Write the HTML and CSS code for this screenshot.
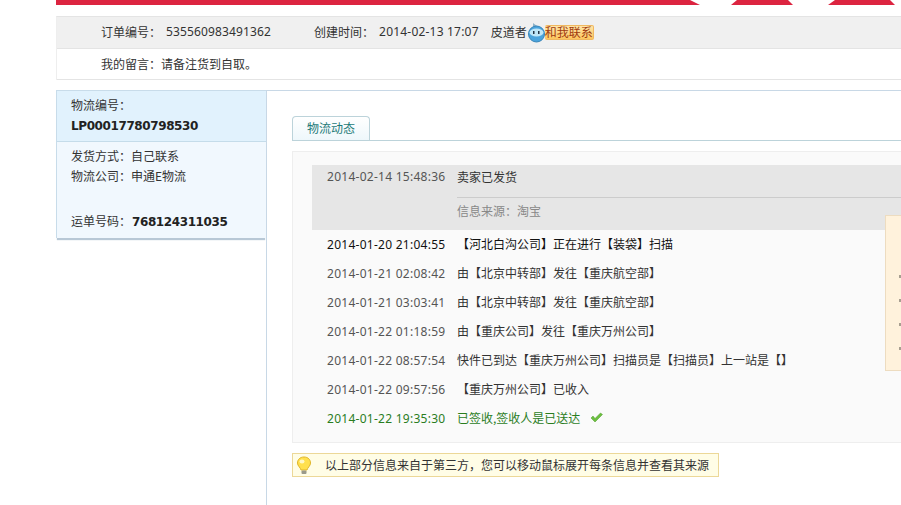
FILE: index.html
```html
<!DOCTYPE html>
<html lang="en">
<head>
    <meta charset="UTF-8">
    <meta name="viewport" content="width=device-width, initial-scale=1.0">
    <title>物流动态</title>
    <link rel="stylesheet" href="styles.css">
</head>
<body>
    <div class="page">
        <!-- Red top band with notches -->
        <svg class="top-band" width="845" height="5" viewBox="0 0 845 5">
            <polygon points="0,0 634,0 644,5 0,5" fill="#dc2440"/>
            <polygon points="681,0 732,0 737,5 675,5" fill="#dc2440"/>
            <polygon points="779,0 834,0 839,5 772,5" fill="#dc2440"/>
        </svg>

        <!-- Order info -->
        <div class="order-info">
            <div class="order-row order-row-grey">
                <span>订单编号：</span>
                <span class="num order-no">535560983491362</span>
                <span class="created">创建时间：</span>
                <span class="num created-time">2014-02-13 17:07</span>
                <span class="seller">皮道者</span>
                <svg class="ww-icon" width="19" height="21" viewBox="0 0 19 21">
                    <path d="M6 1 L12 5.5 L6 6.5 Z" fill="#8fb2c8"/>
                    <circle cx="9.5" cy="12" r="8" fill="#4aa3dc" stroke="#3a86b8"/>
                    <ellipse cx="9.5" cy="10.5" rx="7" ry="4" fill="#bfe6f7"/>
                    <rect x="6" y="9" width="1.5" height="3" fill="#234"/>
                    <rect x="11" y="9" width="1.5" height="3" fill="#234"/>
                </svg>
                <span class="contact-btn">和我联系</span>
            </div>
            <div class="order-row order-row-note">我的留言：请备注货到自取。</div>
        </div>

        <div class="content">
            <!-- Left side panel -->
            <div class="side-panel">
                <div class="side-head">
                    <div>物流编号：</div>
                    <div class="num-bold">LP00017780798530</div>
                </div>
                <div class="side-body">
                    <div>发货方式：自己联系</div>
                    <div>物流公司：申通E物流</div>
                    <div class="waybill">运单号码：<span class="num-bold waybill-no">768124311035</span></div>
                </div>
            </div>

            <!-- Logistics details -->
            <div class="main">
                <div class="tab-bar">
                    <div class="tab">物流动态</div>
                </div>

                <div class="trace-box">
                    <div class="trace-open">
                        <div class="trace-open-top">
                            <span class="num trace-time">2014-02-14 15:48:36</span>
                            <span>卖家已发货</span>
                        </div>
                        <div class="trace-source">信息来源：淘宝</div>
                    </div>

                    <div class="trace-row trace-first">
                        <span class="num trace-time">2014-01-20 21:04:55</span>
                        <span>【河北白沟公司】正在进行【装袋】扫描</span>
                    </div>
                    <div class="trace-row">
                        <span class="num trace-time">2014-01-21 02:08:42</span>
                        <span>由【北京中转部】发往【重庆航空部】</span>
                    </div>
                    <div class="trace-row">
                        <span class="num trace-time">2014-01-21 03:03:41</span>
                        <span>由【北京中转部】发往【重庆航空部】</span>
                    </div>
                    <div class="trace-row">
                        <span class="num trace-time">2014-01-22 01:18:59</span>
                        <span>由【重庆公司】发往【重庆万州公司】</span>
                    </div>
                    <div class="trace-row">
                        <span class="num trace-time">2014-01-22 08:57:54</span>
                        <span>快件已到达【重庆万州公司】扫描员是【扫描员】上一站是【】</span>
                    </div>
                    <div class="trace-row">
                        <span class="num trace-time">2014-01-22 09:57:56</span>
                        <span>【重庆万州公司】已收入</span>
                    </div>
                    <div class="trace-row trace-done">
                        <span class="num trace-time">2014-01-22 19:35:30</span>
                        <span>已签收,签收人是已送达</span>
                        <svg class="check-icon" width="13" height="11" viewBox="0 0 13 11">
                            <path d="M1 6 L3 4 L5 6.5 L10.5 1 L12.5 2.5 L5 10 Z" fill="#6cbf3f" stroke="#4d9a2a" stroke-width="0.5"/>
                        </svg>
                    </div>

                    <!-- Popover lying over the list -->
                    <div class="popover">
                        <i></i><i></i><i></i><i></i>
                    </div>
                </div>

                <div class="tip">
                    <svg class="bulb-icon" width="16" height="19" viewBox="0 0 16 19">
                        <path d="M8 1 C3.8 1 1.5 3.8 1.5 7 C1.5 10 4.5 11.5 5 14 L11 14 C11.5 11.5 14.5 10 14.5 7 C14.5 3.8 12.2 1 8 1 Z" fill="#ffe04d" stroke="#dfb52a"/>
                        <ellipse cx="6" cy="5.5" rx="2.5" ry="2" fill="#fff7c4"/>
                        <rect x="5.5" y="14.5" width="5" height="3.5" rx="1" fill="#9a9a8a"/>
                    </svg>
                    <span class="tip-text">以上部分信息来自于第三方，您可以移动鼠标展开每条信息并查看其来源</span>
                </div>
            </div>
        </div>
    </div>
</body>
</html>
```

FILE: styles.css
```css
html, body {
    margin: 0;
    height: 505px;
    overflow: hidden;
    background-color: white;
}

body {
    font-family: "Noto Sans CJK SC", "DejaVu Sans", sans-serif;
    font-size: 12px;
    color: #333;
}

.page {
    margin-left: 56px;
    height: 505px;
    display: flex;
    flex-direction: column;
}

.top-band {
    display: block;
    flex: none;
    margin-bottom: 11px;
}

.num {
    font-family: "Noto Sans", sans-serif;
    font-size: 12px;
    letter-spacing: 0.27px;
}

.num-bold {
    font-family: "DejaVu Sans", sans-serif;
    font-size: 12px;
    font-weight: bold;
    letter-spacing: -0.4px;
    color: #222;
}

/* Order info */
.order-info {
    flex: none;
    border-top: 1px solid #e4e4e4;
    border-left: 1px solid #eee;
    margin-bottom: 10px;
}

.order-row {
    height: 30px;
    box-sizing: content-box;
    display: flex;
    align-items: center;
    padding-left: 44px;
    border-bottom: 1px solid #e4e4e4;
}

.order-row-grey {
    height: 31px;
    background-color: #f0f0f0;
}

.order-row-note {
    height: 28px;
    padding-bottom: 2px;
}

.order-row-grey > span:not(.contact-btn) {
    margin-bottom: 2px;
}

.order-no {
    margin-left: 5px;
    letter-spacing: 0.14px;
}

.created {
    margin-left: 43px;
}

.created-time {
    margin-left: 5px;
    letter-spacing: 0.2px;
}

.seller {
    margin-left: 12px;
}

.ww-icon {
    flex: none;
    margin-top: -1px;
}

.contact-btn {
    margin-left: -1px;
    margin-bottom: 1px;
    width: 49px;
    height: 15px;
    box-sizing: border-box;
    line-height: 12px;
    text-align: center;
    color: #a03a10;
    background: linear-gradient(#ffe6a8, #fcc55e);
    border: 1px solid #f0b860;
    border-left: none;
    border-radius: 2px;
}

/* Layout below */
.content {
    flex: 1;
    display: flex;
}

.side-panel {
    flex: none;
    align-self: flex-start;
    width: 209px;
    border: 1px solid #c8dcea;
    border-right: none;
    border-bottom: none;
    box-shadow: 0 3px 1px -1px #b8c8d6;
    line-height: 20px;
}

.side-head {
    height: 50px;
    padding-left: 14px;
    background-color: #e1f2fd;
    border-bottom: 1px solid #c5dcea;
}

.side-head > div:first-child {
    padding-top: 4px;
}

.side-head .num-bold {
    padding-top: 1px;
}

.side-body {
    height: 96px;
    padding-left: 14px;
    padding-top: 4px;
    box-sizing: border-box;
    background-color: #f1f8fe;
}

.waybill {
    margin-top: 25px;
}

.waybill-no {
    margin-left: 1px;
}

.main {
    flex: 1;
    min-width: 0;
    border-top: 1px solid #c8d8e6;
    border-left: 1px solid #c8d8e6;
    padding-left: 25px;
    padding-top: 25px;
}

.tab-bar {
    border-bottom: 1px solid #bcd3da;
    height: 24px;
}

.tab {
    width: 78px;
    height: 24px;
    box-sizing: border-box;
    line-height: 22px;
    text-align: center;
    color: #1d7a78;
    background: linear-gradient(#fff, #eef7fb);
    border: 1px solid #bcd3da;
    border-bottom: none;
    border-radius: 4px 4px 0 0;
}

/* Trace list */
.trace-box {
    position: relative;
    margin-top: 10px;
    padding: 13px 0 9px 19px;
    background-color: #fafafa;
    border: 1px solid #eee;
    border-right: none;
}

.trace-open {
    height: 65px;
    background-color: #e6e6e6;
    padding-left: 15px;
}

.trace-open-top {
    height: 32px;
    display: flex;
    align-items: center;
    padding-bottom: 10px;
    box-sizing: border-box;
}

.trace-source {
    margin-left: 130px;
    height: 33px;
    line-height: 26px;
    color: #888;
    border-top: 1px solid #ccc;
    box-sizing: border-box;
}

.trace-row {
    height: 29px;
    box-sizing: border-box;
    padding-bottom: 2px;
    display: flex;
    align-items: center;
    padding-left: 15px;
}

.trace-row .trace-time {
    margin-top: 2px;
}

.trace-time {
    flex: none;
    width: 130px;
    color: #555;
}

.trace-first,
.trace-first .trace-time {
    color: #111;
}

.trace-done,
.trace-done .trace-time {
    color: #2a7d1e;
}

.check-icon {
    margin-left: 10px;
}

/* Popover over the right end of the list */
.popover {
    position: absolute;
    left: 592px;
    top: 63px;
    width: 40px;
    height: 156px;
    box-sizing: border-box;
    padding: 59px 0 0 13px;
    display: flex;
    flex-direction: column;
    gap: 21px;
    background-color: #fff2dc;
    border: 1px solid #eddcc0;
}

.popover i {
    display: block;
    width: 4px;
    height: 3px;
    background-color: #a89f90;
}

/* Tip */
.tip {
    margin-top: 10px;
    width: 427px;
    height: 24px;
    box-sizing: border-box;
    display: flex;
    align-items: center;
    padding-left: 3px;
    background-color: #fffde6;
    border: 1px solid #ecd898;
}

.bulb-icon {
    flex: none;
    margin-right: 13px;
}

.tip-text {
    margin-bottom: 2px;
}
```
